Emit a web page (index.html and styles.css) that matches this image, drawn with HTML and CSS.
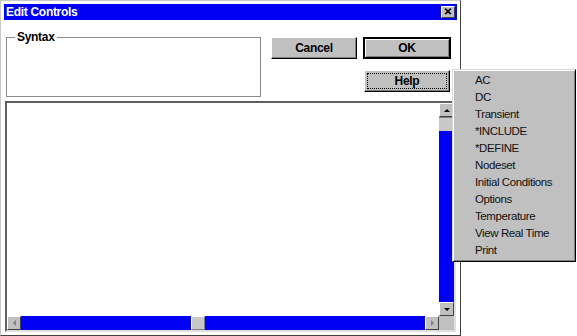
FILE: index.html
```html
<!DOCTYPE html>
<html lang="en">
<head>
  <meta charset="UTF-8" />
  <title>Edit Controls</title>
  <link rel="stylesheet" href="styles.css">
</head>
<body>
  <div class="window">
    <!-- title bar -->
    <div class="titlebar">
      <span class="title">Edit Controls</span>
      <button class="close" aria-label="Close">&#x2715;</button>
    </div>

    <!-- syntax box + buttons -->
    <div class="top">
      <fieldset class="group">
        <legend>Syntax</legend>
      </fieldset>
      <div class="btns">
        <button class="btn">Cancel</button>
        <button class="btn default">OK</button>
        <button class="btn help">Help</button>
      </div>
    </div>

    <!-- edit area -->
    <div class="edit">
      <div class="page"></div>
      <div class="vscroll">
        <div class="sbtn"><span class="arr up"></span></div>
        <div class="thumb"></div>
        <div class="track"></div>
        <div class="sbtn"><span class="arr down"></span></div>
      </div>
      <div class="hscroll">
        <div class="sbtn"><span class="arr left"></span></div>
        <div class="track h1"></div>
        <div class="thumb"></div>
        <div class="track"></div>
        <div class="sbtn"><span class="arr right"></span></div>
      </div>
      <div class="corner"></div>
    </div>
  </div>

  <!-- help popup menu -->
  <ul class="menu">
    <li>AC</li>
    <li>DC</li>
    <li>Transient</li>
    <li>*INCLUDE</li>
    <li>*DEFINE</li>
    <li>Nodeset</li>
    <li>Initial Conditions</li>
    <li>Options</li>
    <li>Temperature</li>
    <li>View Real Time</li>
    <li>Print</li>
  </ul>
</body>
</html>
```

FILE: styles.css
```css
body{margin:0;background:#fff;font-family:"Liberation Sans",Arial,sans-serif;overflow:hidden;}

.window{width:461px;height:336px;box-sizing:border-box;background:#fff;
  border:1px solid;border-color:#c8c8c8 #404040 #404040 #c8c8c8;padding:3px;
  display:flex;flex-direction:column;}

.titlebar{height:16px;background:#0000f4;display:flex;align-items:center;
  justify-content:space-between;padding:0 2px 0 2px;}
.title{color:#fff;font-weight:bold;font-size:12px;letter-spacing:-.3px;}
.close{width:14px;height:12px;padding:0;background:#c0c0c0;font-size:10px;font-weight:bold;
  line-height:10px;color:#000;border:1px solid;border-color:#fff #404040 #404040 #fff;
  font-family:"DejaVu Sans",sans-serif;-webkit-text-stroke:.6px #000;}

.top{height:81px;display:flex;align-items:flex-start;}
.group{margin:10px 0 0 2px;width:255px;height:67px;box-sizing:border-box;padding:0 8px;
  border:1px solid #8c8c8c;min-width:0;}
.group legend{font-size:12px;font-weight:bold;letter-spacing:-.3px;padding:0 2px;
  line-height:14px;margin-left:0;color:#000;}

.btns{margin:17px 0 0 10px;display:grid;grid-template-columns:86px 88px;column-gap:6px;row-gap:11px;}
.btn{height:22px;box-sizing:border-box;background:#c0c0c0;font:bold 12px "Liberation Sans",Arial,sans-serif;
  letter-spacing:-.3px;color:#000;padding:0;border:1px solid;border-color:#fff #000 #000 #fff;
  box-shadow:inset -1px -1px #808080;}
.btn.default{border:2px solid #000;box-shadow:inset 1px 1px #fff,inset -1px -1px #808080;}
.btn.help{grid-column:2;width:86px;justify-self:center;outline:1px dotted #000;outline-offset:-4px;}

.edit{margin:0 1px 0 1px;height:231px;box-sizing:border-box;display:grid;
  grid-template-columns:1fr 15px;grid-template-rows:1fr 14px;
  border:2px solid;border-color:#606060 #e0e0e0 #e0e0e0 #606060;
  box-shadow:inset 1px 1px #000;}
.page{background:#fff;}

.vscroll{display:flex;flex-direction:column;background:#c0c0c0;}
.hscroll{display:flex;background:#c0c0c0;}
.corner{background:#c0c0c0;}
.track{background:#0000f4;flex:1;}
.hscroll .track.h1{flex:0 0 170px;}
.sbtn{width:15px;height:14px;box-sizing:border-box;background:#c0c0c0;border:1px solid;
  border-color:#fff #404040 #404040 #fff;display:flex;align-items:center;justify-content:center;flex:none;}
.hscroll .sbtn{width:14px;}
.vscroll .thumb{height:13px;background:#c8c8c8;border-top:1px solid #808080;}
.hscroll .thumb{width:14px;background:#c8c8c8;box-sizing:border-box;border:1px solid;
  border-color:#fff #808080 #808080 #fff;}
.arr{width:0;height:0;border:3px solid transparent;}
.arr.up{border-bottom-color:#000;border-top-width:0;}
.arr.down{border-top-color:#000;border-bottom-width:0;}
.arr.left{border-right-color:#808080;border-left-width:0;}
.arr.right{border-left-color:#808080;border-right-width:0;}

.menu{position:absolute;left:452px;top:69px;width:124px;height:193px;box-sizing:border-box;
  margin:0;padding:2px 0 0 22px;list-style:none;background:#c0c0c0;
  border:1px solid;border-color:#d8d8d8 #000 #000 #d8d8d8;
  box-shadow:inset 1px 1px #fff,inset -1px -1px #808080;}
.menu li{font-size:11.5px;letter-spacing:-.4px;line-height:16.95px;color:#111;}
```
